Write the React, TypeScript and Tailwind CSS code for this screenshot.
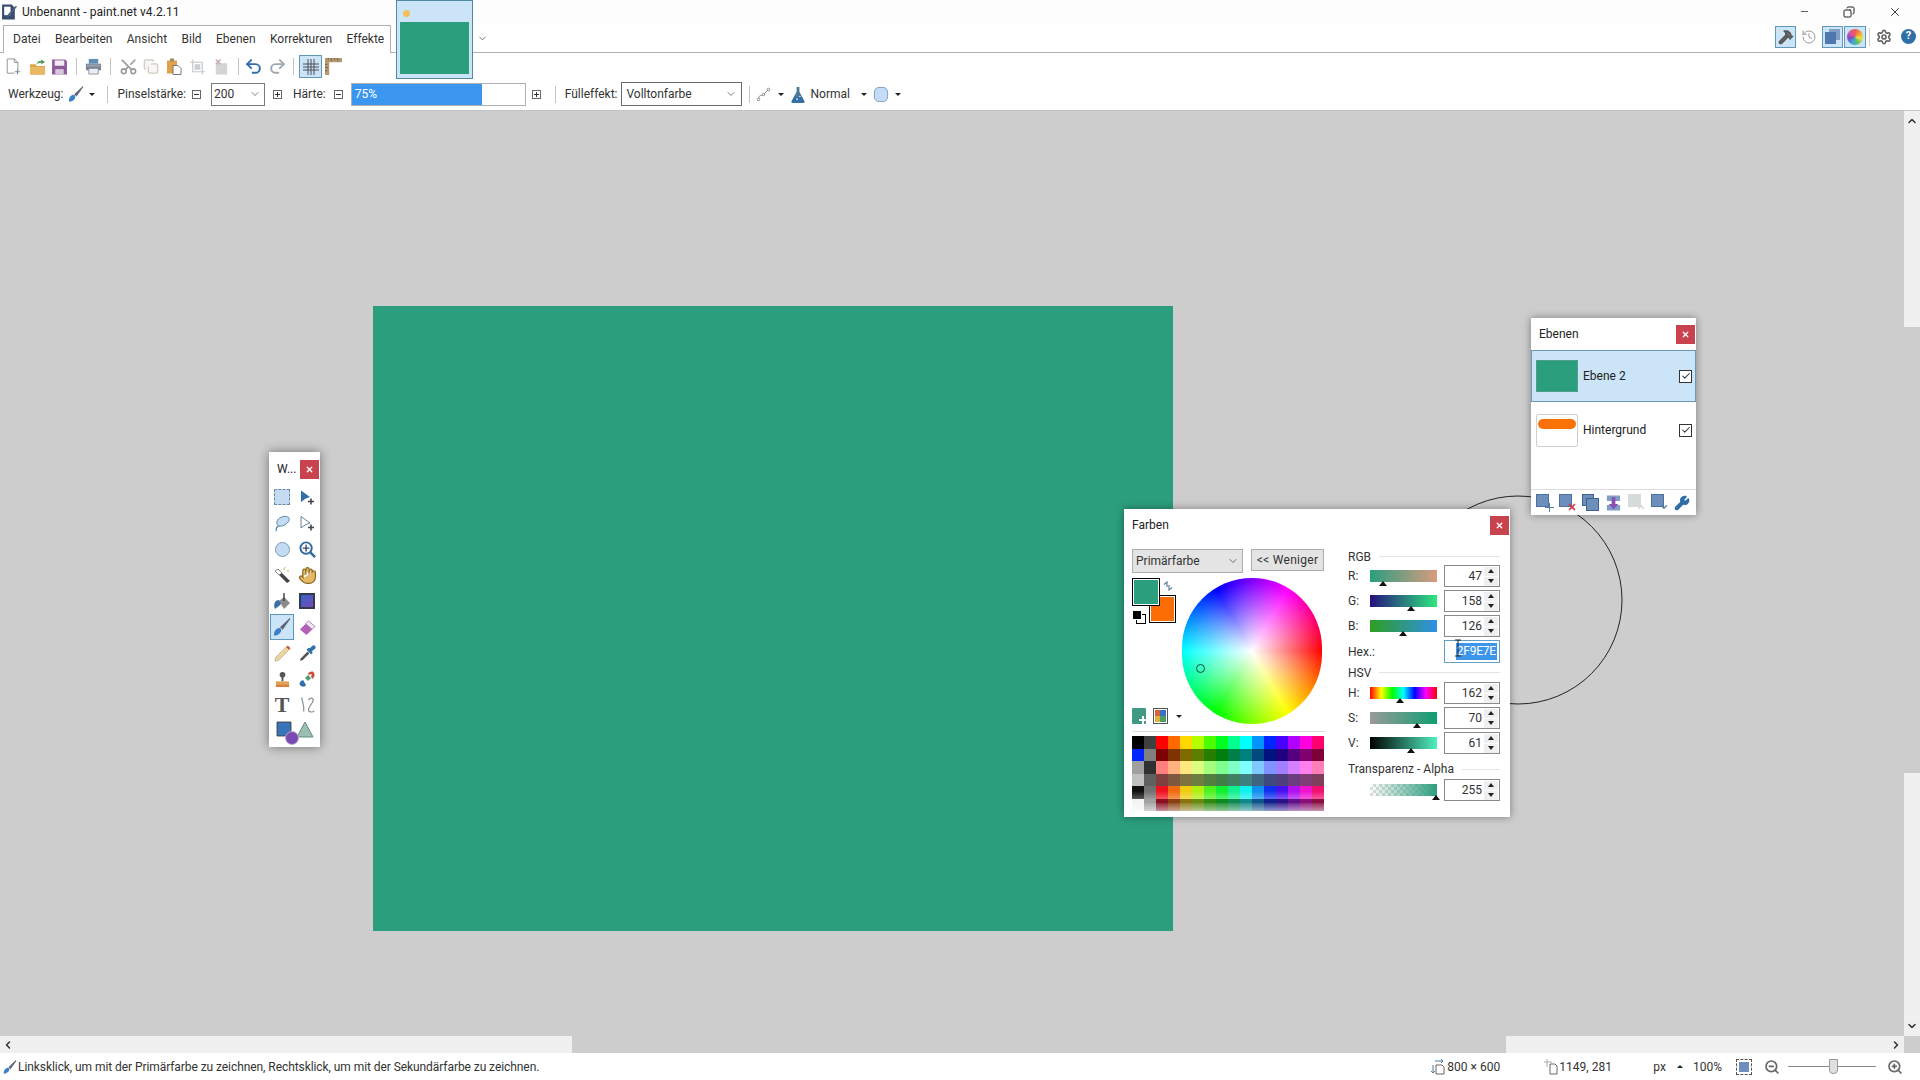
import { Scissors, Undo2, Redo2, ZoomIn, ZoomOut, Settings, History, Hand, Wrench, Hammer, ChevronDown, ChevronLeft, ChevronRight, ChevronUp, Check, Minus, X, Copy } from "lucide-react"

type IconProps = { className?: string }

const PALETTE = [
  ["#000000", "#404040", "#ff0000", "#ff6a00", "#ffd800", "#b6ff00", "#4cff00", "#00ff21", "#00ff90", "#00ffff", "#0094ff", "#0026ff", "#4800ff", "#b200ff", "#ff00dc", "#ff006e"],
  ["#0026ff", "#808080", "#7f0000", "#7f3300", "#7f6a00", "#5b7f00", "#267f00", "#007f0e", "#007f46", "#007f7f", "#004a7f", "#00137f", "#21007f", "#57007f", "#7f006e", "#7f0037"],
  ["#a0a0a0", "#303030", "#ff7f7f", "#ffb27f", "#ffe97f", "#daff7f", "#a5ff7f", "#7fff8e", "#7fffc5", "#7fffff", "#7fc9ff", "#7f92ff", "#a17fff", "#d67fff", "#ff7fed", "#ff7fb6"],
  ["#c0c0c0", "#606060", "#7f3f3f", "#7f593f", "#7f743f", "#6d7f3f", "#527f3f", "#3f7f47", "#3f7f62", "#3f7f7f", "#3f647f", "#3f497f", "#503f7f", "#6b3f7f", "#7f3f76", "#7f3f5b"],
  ["#101010", "#707070", "#f01020", "#f06a10", "#f0cc10", "#b0f010", "#50f020", "#10f030", "#10f090", "#10f0f0", "#1090f0", "#1030f0", "#4810f0", "#b010f0", "#f010d0", "#f01070"],
  ["#f4f4f4", "#a0a0a0", "#8a1020", "#8a4010", "#8a7410", "#688a10", "#308a10", "#108a20", "#108a50", "#108a8a", "#10558a", "#10208a", "#2c108a", "#62108a", "#8a1078", "#8a1044"],
]

const MENU = ["Datei", "Bearbeiten", "Ansicht", "Bild", "Ebenen", "Korrekturen", "Effekte"]

function BrushIcon({ className }: IconProps) {
  return (
    <svg viewBox="0 0 16 16" className={className}>
      <path d="M.8 15.6c0-3 1-5.600 3.500-6.600 1-.4 2-.2 2.600.5.6.7.6 1.800 0 2.900-1.200 2.200-3.500 3.200-6.100 3.200z" fill="#3b7fc4" />
      <path d="M6.200 8.300 14.400.4c.4-.3 1 .1.800.6L8.600 10.500z" fill="#5f6478" />
    </svg>
  )
}

function Caret({ className = "" }: IconProps) {
  return <span className={`block w-0 h-0 border-x-[3px] border-x-transparent border-t-[3px] border-t-[#222] ${className}`} />
}

function NewIcon() {
  return (
    <svg viewBox="0 0 18 20" className="w-[17px] h-[19px]">
      <path d="M2.500 1.500h8l4 4v9" fill="#fff" stroke="#8a8a8a" />
      <path d="M2.500 1.500v16h8" fill="none" stroke="#8a8a8a" />
      <path d="M10.500 1.500v4h4" fill="none" stroke="#8a8a8a" />
      <path d="M14 13v6M11 16h6" stroke="#7a8a9a" strokeWidth="1.200" />
    </svg>
  )
}

function OpenIcon() {
  return (
    <svg viewBox="0 0 18 18" className="w-[17px] h-[18px]">
      <path d="M1 6h6l1.500 2H17v9H1z" fill="#dba64f" />
      <path d="M1 9h16v8H1z" fill="#e8b865" />
      <path d="M8 6c.6-2.400 2.600-3.600 5-3.600V1l4 2.600-4 2.600V4.600C11 4.600 9.500 5 8 6z" fill="#4f9a4f" />
    </svg>
  )
}

function SaveIcon() {
  return (
    <svg viewBox="0 0 16 16" className="w-[17px] h-[18px]">
      <path d="M1 1h12.500L15 2.500V15H1z" fill="#8d5b9b" />
      <path d="M3.500 1.800h9v5h-9z" fill="#f2eaf4" />
      <path d="M4 10h8v5H4z" fill="#d8c6dd" />
    </svg>
  )
}

function PrintIcon() {
  return (
    <svg viewBox="0 0 18 18" className="w-[17px] h-[17px]">
      <path d="M4 1h10v5H4z" fill="#5f8fb5" />
      <path d="M1 6h16v7H1z" fill="#7a8590" />
      <path d="M4 11h10v6H4z" fill="#e8eef3" stroke="#7a8590" strokeWidth=".8" />
      <path d="M2 7h14v2H2z" fill="#9aa7b2" />
    </svg>
  )
}

function PasteIcon() {
  return (
    <svg viewBox="0 0 18 18" className="w-[18px] h-[19px]">
      <path d="M2 3h10v13H2z" fill="#dfa24a" />
      <path d="M5 1h4v3H5z" fill="#9a8a70" />
      <path d="M8 8h5l3 3v6H8z" fill="#fff" stroke="#6a6a6a" strokeWidth=".9" />
    </svg>
  )
}

function CropIcon() {
  return (
    <svg viewBox="0 0 18 18" className="w-[17px] h-[18px] opacity-50">
      <path d="M4 1v13h13M1 4h13v13" fill="none" stroke="#8a9098" strokeWidth="1.200" />
      <path d="M6 6h6v6H6z" fill="#9aa0a8" />
    </svg>
  )
}

function DeselectIcon() {
  return (
    <svg viewBox="0 0 18 18" className="w-[17px] h-[18px] opacity-50">
      <path d="M3 5h12v12H3z" fill="#a8aca8" />
      <path d="M3 1l5 5M8 1 3 6" stroke="#8a5a5a" strokeWidth="1.600" />
    </svg>
  )
}

function GridIcon() {
  return (
    <svg viewBox="0 0 16 16" className="w-[16px] h-[16px]">
      <path d="M5 0v16M8 0v16M11 0v16M0 5h16M0 8h16M0 11h16" stroke="#4a4f58" strokeWidth="1" />
    </svg>
  )
}

function RulerIcon() {
  return (
    <svg viewBox="0 0 16 16" className="w-[17px] h-[17px]">
      <path d="M0 0h16v4H4v12H0z" fill="#b39a74" />
      <path d="M3 0v2M6 0v3M9 0v2M12 0v3M0 6h2M0 9h3M0 12h2" stroke="#6a5638" strokeWidth=".8" />
    </svg>
  )
}

function PathIcon() {
  return (
    <svg viewBox="0 0 18 18" className="w-[15px] h-[17px]">
      <path d="M3 15C3 9 6 11 9 9s3-4 6-6" fill="none" stroke="#777" />
      <circle cx="3" cy="15" r="1.500" fill="#fff" stroke="#777" />
      <circle cx="9" cy="9" r="1.500" fill="#fff" stroke="#777" />
      <circle cx="15" cy="3" r="1.500" fill="#fff" stroke="#777" />
    </svg>
  )
}

function FlaskIcon() {
  return (
    <svg viewBox="0 0 16 18" className="w-[16px] h-[17px]">
      <path d="M5.500 1h5M6.500 1v5L1 16.500c-.2.800.2 1.500 1 1.500h12c.8 0 1.200-.7 1-1.500L9.500 6V1z" fill="#4a7c98" />
      <path d="M3.500 12h9l2 5.500H1.500z" fill="#2f6fa8" />
      <circle cx="7" cy="14" r="1" fill="#d8e8f4" />
      <circle cx="10" cy="11" r=".8" fill="#d8e8f4" />
    </svg>
  )
}

function BlobIcon() {
  return (
    <svg viewBox="0 0 16 18" className="w-[16px] h-[17px]">
      <rect x="1" y="1.500" width="14" height="15" rx="5" fill="#c3dcf8" stroke="#7f99b5" />
    </svg>
  )
}

function SmallBox({ plus }: { plus?: boolean }) {
  return (
    <span className="w-[9px] h-[9px] border border-[#666] flex items-center justify-center">
      <span className="relative block w-[5px] h-px bg-[#333]">
        {plus && <span className="absolute left-[2px] -top-[2px] block w-px h-[5px] bg-[#333]" />}
      </span>
    </span>
  )
}

function Sep() {
  return <span className="block w-px h-[17px] bg-[#c4c4c4]" />
}

function CloseBtn({ className = "" }: IconProps) {
  return (
    <span className={`w-[19px] h-[19px] bg-[#c9434f] flex items-center justify-center ${className}`}>
      <X className="w-[9px] h-[9px] text-white" strokeWidth={3.5} />
    </span>
  )
}

function ToolBtn({ children, active }: { children: React.ReactNode; active?: boolean }) {
  return (
    <span className={`w-[24px] h-[26px] flex items-center justify-center ${active ? "bg-[#cce4f7] border border-[#5f98b8]" : ""}`}>
      {children}
    </span>
  )
}

function ToolsWindow() {
  return (
    <div className="absolute left-[269px] top-[452px] w-[51px] h-[295px] bg-white shadow-[0_0_10px_rgba(0,0,0,0.45)] flex flex-col items-center">
      <div className="w-full h-[30px] flex items-center justify-between pl-[8px] pr-px pt-[4px]">
        <span className="text-[12px] text-[#222]">W...</span>
        <CloseBtn />
      </div>
      <div className="grid grid-cols-[25px_24px] justify-center mt-[2px]">
        <ToolBtn><span className="block w-[16px] h-[16px] bg-[#c3dcf4] border border-dashed border-[#6a8aa8]" /></ToolBtn>
        <ToolBtn>
          <svg viewBox="0 0 16 16" className="w-[16px] h-[17px]">
            <path d="M2 1l9 6.500-4 1.500-1 .5-4 3z" fill="#2f6fa8" />
            <path d="M12 9v6M9 12h6" stroke="#445" strokeWidth="1.600" />
          </svg>
        </ToolBtn>
        <ToolBtn>
          <svg viewBox="0 0 18 18" className="w-[17px] h-[17px]">
            <path d="M3 8c0-4 5-7 10-6.500 4 .5 4 4 1 7s-7 4-9 3C4 11 3 10 3 8z" fill="#c3dcf4" stroke="#5f7f9f" />
            <path d="M5 11.500c-2 1-3 3-2.500 5.500" fill="none" stroke="#4a7fb0" strokeWidth="1.300" />
          </svg>
        </ToolBtn>
        <ToolBtn>
          <svg viewBox="0 0 16 16" className="w-[16px] h-[17px]">
            <path d="M2 1l9 6.500-4 1.500-1 .5-4 3z" fill="#fff" stroke="#6f7f8f" />
            <path d="M12 9v6M9 12h6" stroke="#445" strokeWidth="1.600" />
          </svg>
        </ToolBtn>
        <ToolBtn><span className="block w-[15px] h-[15px] rounded-full bg-[#c3dcf4] border border-[#7f99b5]" /></ToolBtn>
        <ToolBtn>
          <svg viewBox="0 0 18 18" className="w-[17px] h-[17px]">
            <circle cx="7.500" cy="7.500" r="6" fill="#fff" stroke="#2f6a9f" strokeWidth="2" />
            <path d="M7.500 4v7M4 7.500h7" stroke="#2f4a6f" strokeWidth="1.500" />
            <path d="M12 12l5 5" stroke="#2f6a9f" strokeWidth="2.600" />
          </svg>
        </ToolBtn>
        <ToolBtn>
          <svg viewBox="0 0 18 18" className="w-[18px] h-[18px]">
            <path d="M2 5l3-2 12 12-3 2z" fill="#444" />
            <path d="M2 5l3-2 4 4-3 2z" fill="#fff" stroke="#666" strokeWidth=".6" />
            <path d="M10 3h2M14 5h2M12 1v1" stroke="#d8c890" strokeWidth="1.300" />
          </svg>
        </ToolBtn>
        <ToolBtn><Hand className="w-[19px] h-[19px] text-[#8a6a20] fill-[#e4b866]" strokeWidth={1.500} /></ToolBtn>
        <ToolBtn>
          <svg viewBox="0 0 18 18" className="w-[18px] h-[18px]">
            <path d="M6 9l5-4 6 6-6 6z" fill="#8a8a8a" />
            <path d="M11 1v8" stroke="#333" strokeWidth="1.300" />
            <path d="M6 8C2 8 0 12 2 17c2-2 5-3 6-5z" fill="#3a6fa8" />
          </svg>
        </ToolBtn>
        <ToolBtn><span className="block w-[16px] h-[16px] border-2 border-[#333a4a] bg-[linear-gradient(135deg,#2f66c8,#7a4ab8)]" /></ToolBtn>
        <ToolBtn active><BrushIcon className="w-[18px] h-[18px]" /></ToolBtn>
        <ToolBtn>
          <svg viewBox="0 0 18 18" className="w-[17px] h-[17px]">
            <path d="M1 11 10 2l7 6-9 9z" fill="#b45fb8" />
            <path d="M7 5l3-3 7 6-3 3z" fill="#f4e8f4" stroke="#8a5a8f" strokeWidth=".6" />
          </svg>
        </ToolBtn>
        <ToolBtn>
          <svg viewBox="0 0 18 18" className="w-[17px] h-[17px]">
            <path d="M1 17l1-4L13 2l3 3L5 16z" fill="#ecd6a0" stroke="#a89060" strokeWidth=".6" />
            <path d="M13 2l1.500-1.500 3 3L16 5z" fill="#c85040" />
          </svg>
        </ToolBtn>
        <ToolBtn>
          <svg viewBox="0 0 18 18" className="w-[17px] h-[17px]">
            <path d="M1 17l1-3 7-7 2 2-7 7z" fill="#555" />
            <path d="M8 5l5 5 1.500-2-1-1.500L17 4c.800-1 .800-2 0-3s-2-.8-3 0l-2.500 2.500L10 3z" fill="#2f6fa8" />
          </svg>
        </ToolBtn>
        <ToolBtn>
          <svg viewBox="0 0 18 18" className="w-[17px] h-[17px]">
            <circle cx="9" cy="4" r="3" fill="#555" />
            <path d="M8 6h2v5H8z" fill="#555" />
            <path d="M2 11h14v3H2z" fill="#e0a050" />
            <path d="M2 14h14v3H2z" fill="#d8803a" />
          </svg>
        </ToolBtn>
        <ToolBtn>
          <svg viewBox="0 0 18 18" className="w-[18px] h-[18px]">
            <path d="M3 11c-2 2-2 4 0 5s4 1 5-1l-3-5z" fill="#2f6fa8" />
            <path d="M7 8l3-3 3 3-3 3z" fill="#4aa070" />
            <path d="M10 4c2-3 5-3 6-1s1 4-2 6l-1-3c1-1 1-2 0-2s-1 1-2 1z" fill="#d04a3a" />
          </svg>
        </ToolBtn>
        <ToolBtn><span className="font-['Liberation_Serif',serif] text-[22px] leading-none font-bold text-[#555]">T</span></ToolBtn>
        <ToolBtn>
          <svg viewBox="0 0 18 18" className="w-[17px] h-[18px]">
            <path d="M3 1c0 5 3 8 2 15M10 4c1-3 5-3 5 0s-5 7-5 10c0 3 5 3 6 1" fill="none" stroke="#8a8f98" strokeWidth="1.300" />
          </svg>
        </ToolBtn>
      </div>
      <div className="h-[27px] pt-[2px] flex items-center justify-center">
        <svg viewBox="0 0 38 26" className="w-[38px] h-[26px]">
          <path d="M1 2h14v14H1z" fill="#3a74b8" stroke="#333" strokeWidth=".8" />
          <path d="M29 2l8 15H21z" fill="#9abfb0" stroke="#5f8f80" />
          <circle cx="16" cy="18" r="6.500" fill="#7a4ab0" stroke="#c0b0d8" />
        </svg>
      </div>
    </div>
  )
}

function LayerIconBase({ children }: { children: React.ReactNode }) {
  return (
    <span className="relative w-[18px] h-[18px] block">
      <span className="absolute left-0 top-0 w-[13px] h-[13px] bg-[#6d8fbb] border border-[#4f6f9f]" />
      {children}
    </span>
  )
}

function LayersWindow() {
  return (
    <div className="absolute left-[1531px] top-[318px] w-[165px] h-[197px] bg-white shadow-[0_0_8px_rgba(0,0,0,0.4)] flex flex-col">
      <div className="h-[32px] flex items-center justify-between pl-[8px] pr-px">
        <span className="text-[12px] text-[#222]">Ebenen</span>
        <CloseBtn />
      </div>
      <div className="h-[52px] bg-[#cce4f7] border border-[#6d9ab8] flex items-center pl-[4px] pr-[3px]">
        <span className="w-[42px] h-[32px] bg-[#2b9e7e] border border-[#4f9f8a]" />
        <span className="ml-[5px] text-[12px] text-[#222] flex-1">Ebene 2</span>
        <span className="w-[13px] h-[13px] border border-[#333] bg-white flex items-center justify-center">
          <Check className="w-[10px] h-[10px] text-[#333]" strokeWidth={2.500} />
        </span>
      </div>
      <div className="h-[54px] mt-px flex items-center pl-[5px] pr-[4px]">
        <span className="w-[42px] h-[33px] bg-white border border-[#d0d0d0] rounded-[2px] pt-[4px]">
          <span className="block w-[38px] h-[10px] ml-px bg-[#fa7208] rounded-full" />
        </span>
        <span className="ml-[5px] text-[12px] text-[#222] flex-1">Hintergrund</span>
        <span className="w-[13px] h-[13px] border border-[#333] bg-white flex items-center justify-center">
          <Check className="w-[10px] h-[10px] text-[#333]" strokeWidth={2.500} />
        </span>
      </div>
      <div className="mt-auto h-[26px] border-t border-[#dcdcdc] flex items-center justify-between pl-[5px] pr-[6px]">
        <LayerIconBase>
          <span className="absolute right-0 bottom-0"><span className="block relative w-[9px] h-[9px]"><span className="absolute left-[4px] top-0 w-px h-[9px] bg-[#4f7f9f]" /><span className="absolute top-[4px] left-0 h-px w-[9px] bg-[#4f7f9f]" /></span></span>
        </LayerIconBase>
        <LayerIconBase>
          <X className="absolute right-0 bottom-0 w-[10px] h-[10px] text-[#c93a3a]" strokeWidth={4} />
        </LayerIconBase>
        <span className="relative w-[18px] h-[18px] block">
          <span className="absolute left-0 top-0 w-[12px] h-[12px] bg-[#6d8fbb] border border-[#3f5f8f]" />
          <span className="absolute left-[4px] top-[4px] w-[13px] h-[13px] bg-[#6d8fbb] border border-[#3f5f8f]" />
        </span>
        <svg viewBox="0 0 18 18" className="w-[17px] h-[18px]">
          <path d="M2 1h14v6H2zM2 11h14v6H2z" fill="#7f9fc4" />
          <path d="M7 3h4v7h3l-5 6-5-6h3z" fill="#8a4fb0" />
        </svg>
        <span className="relative w-[18px] h-[18px] block opacity-40">
          <span className="absolute left-0 top-0 w-[13px] h-[13px] bg-[#a0a8a8]" />
          <ChevronUp className="absolute right-0 bottom-0 w-[10px] h-[10px] text-[#888]" strokeWidth={3} />
        </span>
        <LayerIconBase>
          <ChevronDown className="absolute right-0 bottom-0 w-[10px] h-[10px] text-[#4f7f9f]" strokeWidth={3} />
        </LayerIconBase>
        <Wrench className="w-[16px] h-[16px] text-[#2f6fa8] fill-[#2f6fa8]" />
      </div>
    </div>
  )
}

function Spin() {
  return (
    <span className="w-[14px] h-[19px] ml-px flex flex-col bg-[#efefef]">
      <span className="flex-1 flex items-center justify-center border-b border-white">
        <span className="block w-0 h-0 border-x-[3px] border-x-transparent border-b-[4px] border-b-[#222]" />
      </span>
      <span className="flex-1 flex items-center justify-center">
        <span className="block w-0 h-0 border-x-[3px] border-x-transparent border-t-[4px] border-t-[#222]" />
      </span>
    </span>
  )
}

function SliderRow({ label, value, pos, bar }: { label: string; value: string; pos: number; bar: string }) {
  return (
    <div className="flex items-center h-[22px]">
      <span className="w-[22px] text-[12px] text-[#333]">{label}</span>
      <div className={`relative w-[67px] h-[12px] ${bar}`}>
        <span className="absolute top-[11px] w-0 h-0 border-x-[4px] border-x-transparent border-b-[5px] border-b-[#111]" style={{ left: pos - 4 }} />
      </div>
      <div className="ml-[7px] w-[56px] h-[22px] border border-[#8a8a8a] bg-white flex items-center justify-end pr-px text-[12px] text-[#333]">
        <span className="mr-px">{value}</span>
        <Spin />
      </div>
    </div>
  )
}

function SectionHead({ label, className }: { label: string; className: string }) {
  return (
    <div className={`flex items-center ${className}`}>
      <span className="text-[12px] text-[#333] whitespace-nowrap">{label}</span>
      <span className="flex-1 ml-[8px] h-px bg-[#e4e4e4]" />
    </div>
  )
}

function ColorsWindow() {
  return (
    <div className="absolute left-[1124px] top-[509px] w-[386px] h-[308px] bg-white shadow-[0_0_8px_rgba(0,0,0,0.4)] flex">
      <div className="w-[224px] pl-[8px] shrink-0">
        <div className="h-[40px] pb-[9px] flex items-center text-[12px] text-[#222]">Farben</div>
        <div className="flex w-[192px] justify-between items-start">
          <div className="w-[111px] h-[24px] bg-[#e4e4e4] border border-[#adadad] flex items-center justify-between px-[3px] text-[12px] text-[#333]">
            Primärfarbe
            <ChevronDown className="w-[12px] h-[12px] text-[#444]" strokeWidth={1.500} />
          </div>
          <div className="w-[73px] h-[22px] bg-[#e4e4e4] border border-[#adadad] flex items-center justify-center text-[12px] text-[#333] tracking-[0.3px]">
            {"<< Weniger"}
          </div>
        </div>
        <div className="flex w-[192px] mt-[5px]">
          <div className="w-[50px] h-[146px] flex flex-col justify-between">
            <div className="relative h-[46px]">
              <span className="absolute left-[17px] top-[17px] w-[27px] h-[28px] bg-[#fa6e05] border border-black outline outline-white -outline-offset-2" />
              <span className="absolute left-0 top-0 w-[28px] h-[28px] bg-[#2b9e7e] border border-black outline outline-white -outline-offset-2" />
              <span className="absolute left-[4px] top-[36px] w-[10px] h-[10px] bg-white border border-black" />
              <span className="absolute left-0 top-[32px] w-[10px] h-[10px] bg-black border border-white" />
              <svg viewBox="0 0 10 10" className="absolute left-[31px] top-[3px] w-[10px] h-[10px]">
                <path d="M1 3.500 4 1v5M9 6.500 6 9V4" fill="none" stroke="#6a8a9f" strokeWidth="1.300" />
              </svg>
            </div>
            <div className="flex items-center">
              <span className="relative w-[15px] h-[16px] bg-[#3f9a84] rounded-[1px] overflow-hidden">
                <span className="absolute right-[2px] bottom-0 w-[2px] h-[8px] bg-white" />
                <span className="absolute right-0 bottom-[3px] w-[7px] h-[2px] bg-white" />
              </span>
              <span className="ml-[7px] w-[16px] h-[16px] border border-[#555] bg-white p-px grid grid-cols-2 grid-rows-2">
                <span className="bg-[#d8603a]" /><span className="bg-[#3a6fc8]" /><span className="bg-[#e0b040]" /><span className="bg-[#4aa060]" />
              </span>
              <Caret className="ml-[8px]" />
            </div>
          </div>
          <div className="relative w-[140px] h-[146px] rounded-full overflow-hidden bg-[conic-gradient(#8000ff,#ff00ff_30deg,#ff0000_90deg,#ffff00_150deg,#00ff00_210deg,#00ffff_270deg,#0000ff_330deg,#8000ff)]">
            <div className="w-full h-full rounded-full bg-[radial-gradient(circle_closest-side,#fff_0%,rgba(255,255,255,0.55)_45%,rgba(255,255,255,0)_100%)]" />
            <span className="absolute left-[14px] top-[86px] w-[9px] h-[9px] rounded-full border border-[#124a40]" />
          </div>
        </div>
        <div className="w-[194px] h-px bg-[#dcdcdc] mt-[7px]" />
        <div className="relative w-[192px] mt-[4px]">
          {PALETTE.map((row, r) => (
            <div key={r} className="flex h-[12.5px]">
              {row.map((color, c) => (
                <span key={c} className="w-[12px] h-full" style={{ background: color }} />
              ))}
            </div>
          ))}
          <div className="absolute left-0 right-0 top-[55px] h-[7.5px] bg-[linear-gradient(rgba(255,255,255,0),rgba(255,255,255,0.3))]" />
          <div className="absolute left-0 right-0 top-[67px] h-[8px] bg-[linear-gradient(rgba(255,255,255,0.1),rgba(255,255,255,0.55))]" />
        </div>
      </div>
      <div className="w-[152px] relative">
        <CloseBtn className="absolute right-[-9px] top-[7px]" />
        <SectionHead label="RGB" className="mt-[39px] h-[17px]" />
        <div className="flex flex-col gap-[3px]">
          <SliderRow label="R:" value="47" pos={13} bar="bg-[linear-gradient(90deg,#2b9e7e,#d99a80)]" />
          <SliderRow label="G:" value="158" pos={41} bar="bg-[linear-gradient(90deg,#25107e,#2fe87e)]" />
          <SliderRow label="B:" value="126" pos={33} bar="bg-[linear-gradient(90deg,#2f9e20,#2f90e8)]" />
        </div>
        <div className="flex items-center h-[23px] mt-[3px]">
          <span className="w-[96px] text-[12px] text-[#333]">Hex.:</span>
          <div className="relative w-[56px] h-[23px] border border-[#5f9fc8] bg-white flex items-center justify-end pr-[2px]">
            <span className="bg-[#3d96ec] text-white text-[12px] leading-[17px] px-px tracking-[-0.2px]">2F9E7E</span>
            <svg viewBox="0 0 8 18" className="absolute left-[9px] -top-[2px] w-[8px] h-[18px]">
              <path d="M1 1h6M1 17h6M4 1v16" stroke="#222" strokeWidth="1" fill="none" />
            </svg>
          </div>
        </div>
        <SectionHead label="HSV" className="h-[19px]" />
        <div className="flex flex-col gap-[3px]">
          <SliderRow label="H:" value="162" pos={30} bar="bg-[linear-gradient(90deg,#f00,#ff0,#0f0,#0ff,#00f,#f0f,#f00)]" />
          <SliderRow label="S:" value="70" pos={47} bar="bg-[linear-gradient(90deg,#9a9a9a,#0f9e70)]" />
          <SliderRow label="V:" value="61" pos={41} bar="bg-[linear-gradient(90deg,#000,#50f0c0)]" />
        </div>
        <SectionHead label="Transparenz - Alpha" className="h-[25px] pt-[5px]" />
        <SliderRow label="" value="255" pos={66} bar="bg-[linear-gradient(90deg,rgba(47,158,126,0),#2f9e7e),repeating-conic-gradient(#ddd_0_25%,#fff_0_50%)] bg-[size:auto,6px_6px]" />
      </div>
    </div>
  )
}

export default function App() {
  return (
    <div className="relative w-[1920px] h-[1080px] overflow-hidden flex flex-col bg-white font-['Roboto',sans-serif] text-[12px] text-[#333]">
      {/* title + menu */}
      <div className="h-[25px] flex items-center shrink-0 bg-[#fdfdfd] pb-[2px]">
        <svg viewBox="0 0 16 16" className="ml-px w-[17px] h-[18px] shrink-0">
          <path d="M1 1h9l3 3v11H1z" fill="#394b6e" />
          <path d="M3 3h6v8H3z" fill="#fff" />
          <path d="M5 12 14 2l1 1-8 10z" fill="#4f5f7f" />
        </svg>
        <span className="ml-[4px] text-[#222] tracking-[0.05px]">Unbenannt - paint.net v4.2.11</span>
        <div className="ml-auto flex items-center">
          <Minus className="w-[11px] h-[11px] text-[#555] mr-[33px]" />
          <Copy className="w-[12px] h-[12px] text-[#222] mr-[33px] -scale-x-100" />
          <X className="w-[14px] h-[14px] text-[#222] mr-[18px]" strokeWidth={1.500} />
        </div>
      </div>
      <div className="h-[28px] flex shrink-0">
        <div className="w-[3px] border-b border-[#b0b0b0]" />
        <div className="w-[388px] border-t border-x border-[#b0b0b0] flex items-center pl-[9px] gap-[14.4px] text-[#333] pb-px">
          {MENU.map((m) => <span key={m}>{m}</span>)}
        </div>
        <div className="flex-1 border-b border-[#b0b0b0] flex items-center justify-end pr-[4px] pb-[4px]">
          <span className="w-[21px] h-[22px] bg-[#cce4f7] border border-[#5f98b8] flex items-center justify-center"><Hammer className="w-[16px] h-[16px] text-[#555] fill-[#666]" /></span>
          <History className="w-[16px] h-[16px] text-[#999] mx-[5px]" strokeWidth={1.500} />
          <span className="w-[21px] h-[22px] bg-[#cce4f7] border border-[#5f98b8] flex items-center justify-center">
            <span className="relative w-[15px] h-[15px]">
              <span className="absolute left-[4px] top-0 w-[11px] h-[11px] bg-[#7f9fc4]" />
              <span className="absolute left-0 top-[3px] w-[11px] h-[12px] bg-[#4f78ae]" />
            </span>
          </span>
          <span className="w-[22px] h-[22px] ml-px bg-[#cce4f7] border border-[#5f98b8] flex items-center justify-center">
            <span className="w-[16px] h-[16px] rounded-full bg-[conic-gradient(#e85c5c,#f0a030,#e8e040,#60c060,#40a0e0,#8050c0,#e050a0,#e85c5c)]" />
          </span>
          <span className="w-px h-[18px] bg-[#d0d0d0] mx-[3px]" />
          <Settings className="w-[16px] h-[16px] text-[#666] ml-[3px]" strokeWidth={2.500} />
          <span className="ml-[9px] w-[15px] h-[15px] rounded-full bg-[#2f6fa8] text-white text-[11px] font-bold flex items-center justify-center">?</span>
        </div>
      </div>
      {/* toolbar */}
      <div className="h-[27px] flex items-center shrink-0 pl-[4px]">
        <span className="w-[16px] ml-[1px] flex justify-center"><NewIcon /></span>
        <span className="ml-[8px]"><OpenIcon /></span>
        <span className="ml-[5px]"><SaveIcon /></span>
        <span className="ml-[8px]"><Sep /></span>
        <span className="ml-[8px]"><PrintIcon /></span>
        <span className="ml-[8px]"><Sep /></span>
        <Scissors className="ml-[8px] w-[19px] h-[19px] text-[#9a9a9a] -rotate-90" />
        <span className="ml-[5px] opacity-50"><Copy className="w-[16px] h-[17px] text-[#a89a80] fill-[#eee]" /></span>
        <span className="ml-[6px]"><PasteIcon /></span>
        <span className="ml-[6px]"><CropIcon /></span>
        <span className="ml-[7px]"><DeselectIcon /></span>
        <span className="ml-[8px]"><Sep /></span>
        <Undo2 className="ml-[5px] w-[19px] h-[19px] text-[#2f6fb0]" strokeWidth={2.500} />
        <Redo2 className="ml-[5px] w-[19px] h-[19px] text-[#a0a8b0]" strokeWidth={2.500} />
        <span className="ml-[6px]"><Sep /></span>
        <span className="ml-[5px] w-[23px] h-[23px] bg-[#cce4f7] border border-[#5f98b8] flex items-center justify-center"><GridIcon /></span>
        <span className="ml-[3px]"><RulerIcon /></span>
      </div>
      {/* tool options */}
      <div className="h-[31px] flex items-center shrink-0 border-b border-[#c4c4c4] pb-[2px]">
        <span className="ml-[8px]">Werkzeug:</span>
        <BrushIcon className="ml-[5px] w-[16px] h-[16px]" />
        <Caret className="ml-[5px]" />
        <span className="ml-[12px]"><Sep /></span>
        <span className="ml-[9px]">Pinselstärke:</span>
        <span className="ml-[6px]"><SmallBox /></span>
        <div className="ml-[10px] w-[54px] h-[23px] border border-[#7a7a7a] flex items-center justify-between pl-[2px] pr-[3px]">
          200
          <ChevronDown className="w-[12px] h-[12px] text-[#555]" strokeWidth={1.500} />
        </div>
        <span className="ml-[8px]"><SmallBox plus /></span>
        <span className="ml-[11px]">Härte:</span>
        <span className="ml-[8px]"><SmallBox /></span>
        <div className="ml-[8px] w-[175px] h-[23px] border border-[#b0b0b0] flex">
          <div className="w-[130px] h-full bg-[#3b96ef] text-white flex items-center pl-[3px]">75%</div>
        </div>
        <span className="ml-[6px]"><SmallBox plus /></span>
        <span className="ml-[14px]"><Sep /></span>
        <span className="ml-[9px]">Fülleffekt:</span>
        <div className="ml-[4px] w-[121px] h-[24px] border border-[#6a6a6a] flex items-center justify-between pl-[4px] pr-[4px]">
          Volltonfarbe
          <ChevronDown className="w-[12px] h-[12px] text-[#555]" strokeWidth={1.500} />
        </div>
        <span className="ml-[7px]"><Sep /></span>
        <span className="ml-[6px]"><PathIcon /></span>
        <Caret className="ml-[7px]" />
        <span className="ml-[6px]"><FlaskIcon /></span>
        <span className="ml-[4px]">Normal</span>
        <Caret className="ml-[11px]" />
        <span className="ml-[6px]"><BlobIcon /></span>
        <Caret className="ml-[6px]" />
      </div>
      {/* workspace */}
      <div className="flex-1 flex min-h-0">
        <div className="flex-1 bg-[#cdcdcd] pl-[373px] pt-[195px]">
          <div className="w-[800px] h-[625px] bg-[#2b9e7e]" />
        </div>
        <div className="w-[16px] bg-[#f0f0f0] flex flex-col items-center pt-[4px] pb-[4px]">
          <ChevronUp className="w-[12px] h-[12px] text-[#333]" strokeWidth={3} />
          <div className="w-full h-[446px] mt-[200px] bg-[#cdcdcd]" />
          <ChevronDown className="mt-auto w-[12px] h-[12px] text-[#333]" strokeWidth={3} />
        </div>
      </div>
      {/* horizontal scrollbar */}
      <div className="h-[17px] flex shrink-0 bg-[#f0f0f0]">
        <div className="flex-1 flex items-center pl-[2px]">
          <ChevronLeft className="w-[12px] h-[12px] text-[#333]" strokeWidth={3} />
          <div className="ml-[558px] w-[934px] h-full bg-[#cdcdcd]" />
          <ChevronRight className="ml-auto mr-[2px] w-[12px] h-[12px] text-[#333]" strokeWidth={3} />
        </div>
        <div className="w-[16px] bg-[#cdcdcd]" />
      </div>
      {/* status bar */}
      <div className="h-[27px] flex items-center shrink-0 text-[12px] text-[#333]">
        <BrushIcon className="ml-[3px] w-[14px] h-[14px]" />
        <span className="ml-px whitespace-nowrap tracking-[-0.07px]">Linksklick, um mit der Primärfarbe zu zeichnen, Rechtsklick, um mit der Sekundärfarbe zu zeichnen.</span>
        <div className="ml-auto flex items-center">
          <svg viewBox="0 0 14 16" className="w-[14px] h-[16px]">
            <path d="M5 6h6l2 2v7H5z" fill="#fff" stroke="#666" />
            <path d="M4 2h8M10 0l2 2-2 2M2 6v8M0 12l2 2 2-2" fill="none" stroke="#4a7fa8" />
          </svg>
          <span className="ml-[2px] w-[97px]">800 × 600</span>
          <svg viewBox="0 0 14 16" className="w-[14px] h-[16px]">
            <path d="M6 5h5l2 2v8H6z" fill="#fff" stroke="#666" />
            <path d="M3 0v8M0 3h8" stroke="#9a9a9a" strokeWidth=".8" />
          </svg>
          <span className="ml-px w-[94px]">1149, 281</span>
          <span>px</span>
          <span className="ml-[11px] block w-0 h-0 border-x-[3px] border-x-transparent border-b-[3px] border-b-[#222]" />
          <span className="ml-[10px]">100%</span>
          <span className="ml-[14px] w-[16px] h-[16px] border border-dashed border-[#555] flex items-center justify-center">
            <span className="w-[10px] h-[10px] bg-[#6d8fbb]" />
          </span>
          <ZoomOut className="ml-[12px] w-[16px] h-[16px] text-[#666]" strokeWidth={2.500} />
          <div className="relative ml-[8px] w-[88px] h-px bg-[#888]">
            <span className="absolute left-[41px] -top-[7px] w-[9px] h-[15px] bg-[#e0e0e0] border border-[#999] rounded-b-[4px]" />
          </div>
          <ZoomIn className="ml-[11px] mr-[17px] w-[16px] h-[16px] text-[#666]" strokeWidth={2.500} />
        </div>
      </div>

      {/* document thumbnail strip hanging over the menu */}
      <div className="absolute left-[396px] top-0 w-[77px] h-[79px] bg-[#cce4f7] border border-[#4f8ba8] px-[3px]">
        <span className="absolute left-[6px] top-[9px] w-[7px] h-[7px] rounded-full bg-[#f0c060]" />
        <div className="mt-[21px] h-[52px] bg-[#2b9e7e]" />
      </div>
      <ChevronDown className="absolute left-[477px] top-[33px] w-[11px] h-[11px] text-[#666]" strokeWidth={2} />

      <svg viewBox="0 0 212 212" className="absolute left-[1412px] top-[494px] w-[212px] h-[212px]">
        <circle cx="106" cy="106" r="104" fill="none" stroke="#222" strokeWidth="1" />
      </svg>

      <ToolsWindow />
      <LayersWindow />
      <ColorsWindow />
    </div>
  )
}
